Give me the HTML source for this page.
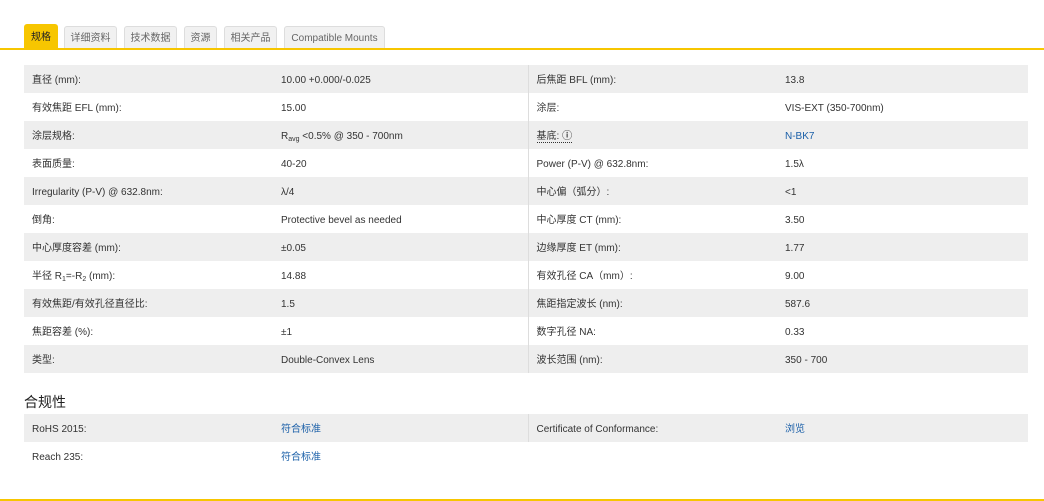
<!DOCTYPE html><html><head><meta charset="utf-8"><style>
body{margin:0;background:#fff;font-family:"Liberation Sans","Noto Sans CJK SC",sans-serif;font-size:10px;color:#333;width:1044px;height:501px;position:relative;overflow:hidden}
.tab{position:absolute;top:26px;height:22px;line-height:24px;background:#f1f1f1;border:1px solid #ddd;border-bottom:none;border-radius:3px 3px 0 0;color:#666;text-align:center;box-sizing:border-box;font-size:10px}
.tab.a{background:#f7c600;border-color:#f7c600;color:#222;top:24px;height:24px;line-height:26px}
.line{position:absolute;left:0;width:1044px;height:2px;background:#f7c600}
table{position:absolute;left:24px;width:1004px;border-collapse:collapse;table-layout:fixed}
td{height:28px;padding:0 0 0 8px;white-space:nowrap;color:#333;vertical-align:middle;line-height:12px}
td div{height:12px;line-height:12px;overflow:visible;position:relative;top:2px}
tr:nth-child(odd) td{background:#eeeeee}
td.d{border-left:1px solid #ddd}
sub{font-size:7px;line-height:0;vertical-align:-2px}
a{color:#1a5fa8;text-decoration:none}
h3{position:absolute;left:24px;top:392px;margin:0;font-size:14px;font-weight:normal;color:#222}
</style></head><body>
<div class="tab a" style="left:24px;width:34px">规格</div>
<div class="tab" style="left:64px;width:53px">详细资料</div>
<div class="tab" style="left:124px;width:53px">技术数据</div>
<div class="tab" style="left:184px;width:33px">资源</div>
<div class="tab" style="left:224px;width:53px">相关产品</div>
<div class="tab" style="left:284px;width:101px">Compatible Mounts</div>
<div class="line" style="top:48px"></div>
<table style="top:65px">
<colgroup><col style="width:249px"><col style="width:255px"><col style="width:249px"><col style="width:251px"></colgroup>
<tr><td><div>直径 (mm):</div></td><td><div>10.00 +0.000/-0.025</div></td><td class="d"><div>后焦距 BFL (mm):</div></td><td><div>13.8</div></td></tr>
<tr><td><div>有效焦距 EFL (mm):</div></td><td><div>15.00</div></td><td class="d"><div>涂层:</div></td><td><div>VIS-EXT (350-700nm)</div></td></tr>
<tr><td><div>涂层规格:</div></td><td><div>R<sub>avg</sub> &lt;0.5% @ 350 - 700nm</div></td><td class="d"><div><span style="border-bottom:1px dotted #333">基底: <b>ⓘ</b></span></div></td><td><div><a>N-BK7</a></div></td></tr>
<tr><td><div>表面质量:</div></td><td><div>40-20</div></td><td class="d"><div>Power (P-V) @ 632.8nm:</div></td><td><div>1.5λ</div></td></tr>
<tr><td><div>Irregularity (P-V) @ 632.8nm:</div></td><td><div>λ/4</div></td><td class="d"><div>中心偏（弧分）:</div></td><td><div>&lt;1</div></td></tr>
<tr><td><div>倒角:</div></td><td><div>Protective bevel as needed</div></td><td class="d"><div>中心厚度 CT (mm):</div></td><td><div>3.50</div></td></tr>
<tr><td><div>中心厚度容差 (mm):</div></td><td><div>±0.05</div></td><td class="d"><div>边缘厚度 ET (mm):</div></td><td><div>1.77</div></td></tr>
<tr><td><div>半径 R<sub>1</sub>=-R<sub>2</sub> (mm):</div></td><td><div>14.88</div></td><td class="d"><div>有效孔径 CA（mm）:</div></td><td><div>9.00</div></td></tr>
<tr><td><div>有效焦距/有效孔径直径比:</div></td><td><div>1.5</div></td><td class="d"><div>焦距指定波长 (nm):</div></td><td><div>587.6</div></td></tr>
<tr><td><div>焦距容差 (%):</div></td><td><div>±1</div></td><td class="d"><div>数字孔径 NA:</div></td><td><div>0.33</div></td></tr>
<tr><td><div>类型:</div></td><td><div>Double-Convex Lens</div></td><td class="d"><div>波长范围 (nm):</div></td><td><div>350 - 700</div></td></tr>
</table>
<h3>合规性</h3>
<table style="top:414px">
<colgroup><col style="width:249px"><col style="width:255px"><col style="width:249px"><col style="width:251px"></colgroup>
<tr><td><div>RoHS 2015:</div></td><td><div><a>符合标准</a></div></td><td class="d"><div>Certificate of Conformance:</div></td><td><div><a>浏览</a></div></td></tr>
<tr><td><div>Reach 235:</div></td><td><div><a>符合标准</a></div></td><td></td><td></td></tr>
</table>
<div class="line" style="top:499px"></div>
</body></html>
